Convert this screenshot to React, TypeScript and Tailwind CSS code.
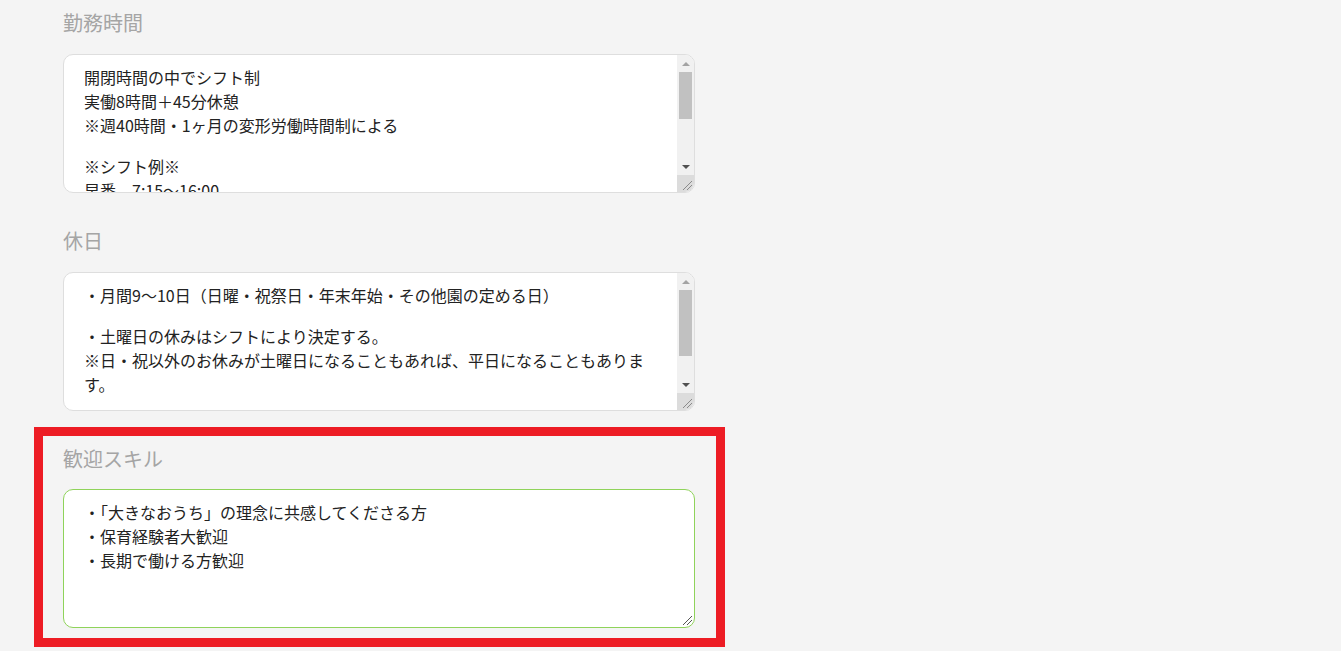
const sections = [
  {
    title: "勤務時間",
    paragraphs: [
      ["開閉時間の中でシフト制", "実働8時間＋45分休憩", "※週40時間・1ヶ月の変形労働時間制による"],
      ["※シフト例※", "早番　7:15～16:00"],
    ],
    thumb: "h-[47px]",
  },
  {
    title: "休日",
    paragraphs: [
      ["・月間9～10日（日曜・祝祭日・年末年始・その他園の定める日）"],
      ["・土曜日の休みはシフトにより決定する。", "※日・祝以外のお休みが土曜日になることもあれば、平日になることもあります。"],
    ],
    thumb: "h-[66px]",
  },
];

const skills = ["・「大きなおうち」の理念に共感してくださる方", "・保育経験者大歓迎", "・長期で働ける方歓迎"];

function Grip({ dark }: { dark?: boolean }) {
  return (
    <svg width="17" height="17" viewBox="0 0 17 17" className="block">
      <line x1="6" y1="15" x2="15" y2="6" stroke={dark ? "#555" : "#8a8a8a"} strokeWidth="1" />
      <line x1="10" y1="15" x2="15" y2="10" stroke={dark ? "#555" : "#8a8a8a"} strokeWidth="1" />
    </svg>
  );
}

function Scrollbar({ thumb }: { thumb: string }) {
  return (
    <div className="flex w-[17px] shrink-0 flex-col bg-[#f1f1f1]">
      <div className="flex h-[17px] items-center justify-center">
        <div className="h-0 w-0 border-x-[4px] border-b-[4px] border-x-transparent border-b-[#a3a3a3]" />
      </div>
      <div className="flex-1">
        <div className={`mx-[2px] bg-[#c1c1c1] ${thumb}`} />
      </div>
      <div className="flex h-[17px] items-center justify-center">
        <div className="h-0 w-0 border-x-[4px] border-t-[4px] border-x-transparent border-t-[#505050]" />
      </div>
      <div className="h-[17px] bg-[#dcdcdc]">
        <Grip />
      </div>
    </div>
  );
}

function Label({ children }: { children: string }) {
  return <h3 className="h-[28px] text-[20px] font-normal leading-[28px] text-[#a5a5a5]">{children}</h3>;
}

export default function App() {
  return (
    <div
      className="min-h-screen bg-[#f4f4f4] pl-[63px] pt-[9px] text-[16px] leading-[24px] text-[#222]"
      style={{ fontFamily: '"Noto Sans CJK JP", "Noto Sans", sans-serif' }}
    >
      <div className="flex w-[632px] flex-col gap-[34px]">
        {sections.map((section) => (
          <section key={section.title}>
            <Label>{section.title}</Label>
            <div className="mt-[17px] flex h-[139px] overflow-hidden rounded-[10px] border border-[#dedede] bg-white">
              <div className="flex-1 overflow-hidden pl-5 pr-5 pt-[10px]">
                {section.paragraphs.map((lines, i) => (
                  <div key={i} className={i > 0 ? "mt-[17px]" : ""}>
                    {lines.map((line) => (
                      <p key={line}>{line}</p>
                    ))}
                  </div>
                ))}
              </div>
              <Scrollbar thumb={section.thumb} />
            </div>
          </section>
        ))}

        <section className="relative">
          <Label>歓迎スキル</Label>
          <div className="relative mt-[16px] h-[139px] rounded-[10px] border border-[#8fd35a] bg-white pl-5 pr-[37px] pt-[10px]">
            {skills.map((line) => (
              <p key={line}>{line}</p>
            ))}
            <div className="absolute bottom-0 right-0">
              <Grip dark />
            </div>
          </div>
          <div className="pointer-events-none absolute left-[-29px] top-[-18px] h-[220px] w-[691px] border-[9px] border-[#ed1c24]" />
        </section>
      </div>
    </div>
  );
}
